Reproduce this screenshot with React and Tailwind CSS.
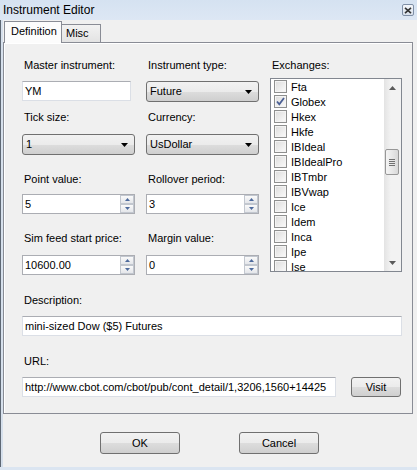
import React from 'react';

const exchanges = ['Fta', 'Globex', 'Hkex', 'Hkfe', 'IBIdeal', 'IBIdealPro', 'IBTmbr', 'IBVwap', 'Ice', 'Idem', 'Inca', 'Ipe', 'Ise'];

const Arrow = () => (
    <svg width="7" height="4" viewBox="0 0 7 4">
        <path d="M0 0h7L3.5 4z" fill="#000" />
    </svg>
);

const Label = ({ children }) => (
    <div className="pl-[2px] text-[11px] leading-[13px] whitespace-nowrap">{children}</div>
);

const Combo = ({ value }) => (
    <div className="flex h-[21px] items-center justify-between rounded-[3px] border border-[#707070] bg-[linear-gradient(to_bottom,#f2f2f2_0%,#ebebeb_50%,#dddddd_50%,#cfcfcf_100%)] pl-[3px] pr-[6px] text-[11px]">
        <span>{value}</span>
        <Arrow />
    </div>
);

const TextBox = ({ value, className = '' }) => (
    <div className={`h-[20px] overflow-hidden whitespace-nowrap border border-[#dbdfe6] border-t-[#abadb3] bg-white pl-[2px] text-[11px] leading-[18px] ${className}`}>
        {value}
    </div>
);

const SpinBtn = ({ up }) => (
    <div className="flex h-[9px] w-[14px] items-center justify-center border border-[#c2c7cf] bg-[linear-gradient(to_bottom,#fafafa,#e4e6ea)]">
        <svg width="5" height="3" viewBox="0 0 5 3">
            <path d={up ? 'M0 3h5L2.5 0z' : 'M0 0h5L2.5 3z'} fill="#4d6a9c" />
        </svg>
    </div>
);

const Spin = ({ value }) => (
    <div className="flex h-[20px] items-center border border-[#abadb3] bg-white pl-[2px] text-[11px]">
        <span className="flex-1">{value}</span>
        <div className="flex flex-col">
            <SpinBtn up />
            <SpinBtn />
        </div>
    </div>
);

const Button = ({ children, className = '' }) => (
    <div className={`flex items-center justify-center rounded-[3px] border border-[#707070] bg-[linear-gradient(to_bottom,#f2f2f2_0%,#ebebeb_50%,#dddddd_50%,#cfcfcf_100%)] text-[11px] ${className}`}>
        {children}
    </div>
);

const CheckBox = ({ checked }) => (
    <div className="flex h-[13px] w-[13px] shrink-0 items-center justify-center border border-[#8e8f8f] bg-[linear-gradient(to_bottom_right,#dcdcdc,#fbfbfb)] shadow-[inset_0_0_0_1px_#f4f4f4]">
        {checked && (
            <svg width="9" height="9" viewBox="0 0 9 9">
                <path d="M1 4.5l2.3 2.8L8 1" stroke="#4a5f94" strokeWidth="1.8" fill="none" />
            </svg>
        )}
    </div>
);

const ExchangeList = () => (
    <div className="flex h-[194px] w-[132px] border border-[#828790] bg-white">
        <div className="flex-1 overflow-hidden pl-[3px]">
            {exchanges.map((ex) => (
                <div key={ex} className="flex h-[15px] items-center gap-[4px] text-[11px] leading-[12px]">
                    <CheckBox checked={ex === 'Globex'} />
                    <span>{ex}</span>
                </div>
            ))}
        </div>
        <div className="flex w-[17px] flex-col bg-[linear-gradient(to_right,#e3e3e3,#f2f2f2_40%,#f2f2f2)]">
            <div className="flex h-[17px] items-center justify-center">
                <svg width="7" height="4" viewBox="0 0 7 4"><path d="M0 4h7L3.5 0z" fill="#5a5a5a" /></svg>
            </div>
            <div className="h-[53px]" />
            <div className="ml-[1px] flex h-[26px] w-[14px] flex-col items-center justify-center gap-[1px] rounded-[2px] border border-[#979797] bg-[linear-gradient(to_right,#f4f4f4,#e8e8e8_50%,#d8d8d8)]">
                <div className="h-px w-[6px] bg-[#707070]" />
                <div className="h-px w-[6px] bg-[#707070]" />
                <div className="h-px w-[6px] bg-[#707070]" />
                <div className="h-px w-[6px] bg-[#707070]" />
            </div>
            <div className="flex-1" />
            <div className="flex h-[17px] items-center justify-center">
                <svg width="7" height="4" viewBox="0 0 7 4"><path d="M0 0h7L3.5 4z" fill="#5a5a5a" /></svg>
            </div>
        </div>
    </div>
);

const App = () => {
    return (
        <div className="flex h-[470px] w-[417px] flex-col overflow-hidden bg-[#f0f0f0] font-['Liberation_Sans',Arial,sans-serif] text-black">
            <div className="flex h-[20px] items-center bg-[linear-gradient(to_bottom,#d5e2f1,#dde7f4)] pl-[3px] pr-[3px] text-[12px]">
                <span>Instrument Editor</span>
                <div className="ml-auto flex h-[12px] w-[12px] items-center justify-center rounded-[2px] border border-[#7f8fa6] bg-[linear-gradient(to_bottom,#f3f6fa,#d9e1ec)]">
                    <svg width="8" height="7" viewBox="0 0 8 7">
                        <path d="M1 0.8l6 5.4M7 0.8l-6 5.4" stroke="#333" strokeWidth="1.6" />
                    </svg>
                </div>
            </div>

            <div className="flex flex-1">
                <div className="w-[1px] bg-[#5e6874]" />
                <div className="w-[2px] bg-[#d6e0ec]" />
                <div className="flex flex-1 flex-col">
                    <div className="relative z-10 flex h-[22px] items-end pl-[1px]">
                        <div className="mb-[-1px] flex h-[22px] w-[58px] items-center border border-b-0 border-[#898c95] bg-[#fcfcfc] pb-[2px] pl-[6px] text-[11px]">
                            Definition
                        </div>
                        <div className="flex h-[18px] w-[39px] items-center border border-b-0 border-l-0 border-[#898c95] bg-[linear-gradient(to_bottom,#f2f2f2,#e3e3e3)] pl-[4px] text-[11px]">
                            Misc
                        </div>
                    </div>

                    <div className="h-[372px] w-[410px] border border-[#898c95] pl-[18px] pt-[16px] shadow-[inset_1px_1px_0_#fff]">
                        <div className="flex">
                            <div className="grid grid-cols-[113px_113px] gap-x-[11px]">
                                <div>
                                    <Label>Master instrument:</Label>
                                    <TextBox value="YM" className="mt-[9px] w-[109px]" />
                                </div>
                                <div>
                                    <Label>Instrument type:</Label>
                                    <div className="mt-[9px]"><Combo value="Future" /></div>
                                </div>
                                <div className="mt-[9px]">
                                    <Label>Tick size:</Label>
                                    <div className="mt-[10px]"><Combo value="1" /></div>
                                </div>
                                <div className="mt-[9px]">
                                    <Label>Currency:</Label>
                                    <div className="mt-[10px]"><Combo value="UsDollar" /></div>
                                </div>
                                <div className="mt-[18px]">
                                    <Label>Point value:</Label>
                                    <div className="mt-[8px]"><Spin value="5" /></div>
                                </div>
                                <div className="mt-[18px]">
                                    <Label>Rollover period:</Label>
                                    <div className="mt-[8px]"><Spin value="3" /></div>
                                </div>
                                <div className="mt-[18px]">
                                    <Label>Sim feed start price:</Label>
                                    <div className="mt-[10px]"><Spin value="10600.00" /></div>
                                </div>
                                <div className="mt-[18px]">
                                    <Label>Margin value:</Label>
                                    <div className="mt-[10px]"><Spin value="0" /></div>
                                </div>
                            </div>
                            <div className="ml-[11px]">
                                <Label>Exchanges:</Label>
                                <div className="mt-[6px]"><ExchangeList /></div>
                            </div>
                        </div>

                        <div className="mt-[19px]">
                            <Label>Description:</Label>
                            <TextBox value="mini-sized Dow ($5) Futures" className="mt-[9px] w-[380px]" />
                        </div>

                        <div className="mt-[19px]">
                            <Label>URL:</Label>
                            <div className="mt-[9px] flex items-start">
                                <TextBox value="http://www.cbot.com/cbot/pub/cont_detail/1,3206,1560+14425" className="w-[314px]" />
                                <Button className="ml-[15px] h-[20px] w-[50px]">Visit</Button>
                            </div>
                        </div>
                    </div>

                    <div className="mt-[18px] flex pl-[97px]">
                        <Button className="h-[22px] w-[80px]">OK</Button>
                        <Button className="ml-[59px] h-[22px] w-[80px]">Cancel</Button>
                    </div>
                </div>
            </div>
            <div className="h-[3px] bg-[#dbe5f1]" />
        </div>
    );
};

export default App;
